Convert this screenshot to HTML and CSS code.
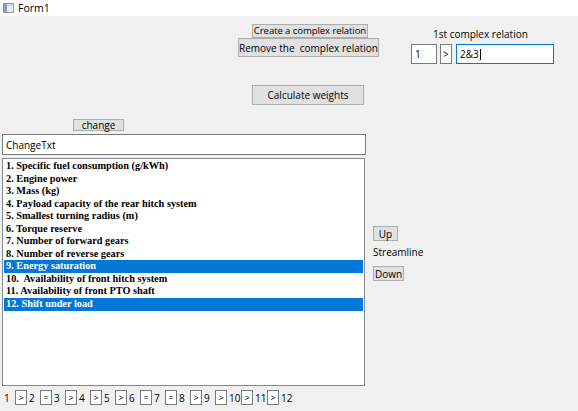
FILE: index.html
```html
<!DOCTYPE html>
<html>
<head>
<meta charset="utf-8">
<link rel="stylesheet" href="styles.css">
</head>
<body>
<div class="window">
  <div class="titlebar">
    <svg class="appicon" width="11" height="10" viewBox="0 0 11 10">
      <rect x="0.5" y="0.5" width="10" height="9" fill="#e8eef0" stroke="#8a9aa0"/>
      <rect x="1" y="1" width="3" height="8" fill="#7fa6b0"/>
      <rect x="4" y="1" width="6" height="2" fill="#c9d6da"/>
    </svg>
    <span class="title">Form1</span>
  </div>
  <div class="form">
    <div class="row-top">
      <div class="relbtns">
        <button class="btn btn-create">Create a complex relation</button>
        <button class="btn btn-remove">Remove the&nbsp; complex relation</button>
      </div>
      <div class="complex">
        <div class="complex-label">1st complex relation</div>
        <div class="complex-inputs">
          <div class="tb tb-num">1</div>
          <div class="tb tb-op">&gt;</div>
          <div class="tb tb-rel">2&amp;3<span class="caret"></span></div>
        </div>
      </div>
    </div>
    <div class="row-calc">
      <button class="btn btn-calc">Calculate weights</button>
    </div>
    <div class="row-change">
      <button class="btn btn-change">change</button>
    </div>
    <div class="tb tb-change">ChangeTxt</div>
    <div class="row-list">
      <ul class="list">
        <li>1. Specific fuel consumption (g/kWh)</li>
        <li>2. Engine power</li>
        <li>3. Mass (kg)</li>
        <li>4. Payload capacity of the rear hitch system</li>
        <li>5. Smallest turning radius (m)</li>
        <li>6. Torque reserve</li>
        <li>7. Number of forward gears</li>
        <li>8. Number of reverse gears</li>
        <li class="sel">9. Energy saturation</li>
        <li>10.&nbsp; Availability of front hitch system</li>
        <li>11. Availability of front PTO shaft</li>
        <li class="sel">12. Shift under load</li>
      </ul>
      <div class="side">
        <button class="btn btn-up">Up</button>
        <div class="streamline">Streamline</div>
        <button class="btn btn-down">Down</button>
      </div>
    </div>
    <div class="row-rel">
      <span class="n">1</span><span class="op">&gt;</span>
      <span class="n">2</span><span class="op">=</span>
      <span class="n">3</span><span class="op">&gt;</span>
      <span class="n">4</span><span class="op">&gt;</span>
      <span class="n">5</span><span class="op">&gt;</span>
      <span class="n">6</span><span class="op">=</span>
      <span class="n">7</span><span class="op">=</span>
      <span class="n">8</span><span class="op">&gt;</span>
      <span class="n">9</span><span class="op">&gt;</span>
      <span class="n n2">10</span><span class="op">&gt;</span>
      <span class="n n2">11</span><span class="op">&gt;</span>
      <span class="n">12</span>
    </div>
  </div>
</div>
</body>
</html>
```
FILE: styles.css
```css
* { box-sizing: border-box; }
html, body { margin: 0; padding: 0; }
body {
  width: 578px;
  height: 411px;
  overflow: hidden;
  background: #f0f0f0;
  font-family: "Open Sans", "Noto Sans", sans-serif;
  font-size: 10px;
  color: #000;
}
.window { width: 578px; height: 411px; display: flex; flex-direction: column; }
.titlebar {
  height: 16px;
  background: #ffffff;
  display: flex;
  align-items: center;
  padding-left: 3px;
  flex: none;
}
.appicon { margin-right: 4px; }
.title { font-size: 10.5px; color: #000; }
.form {
  flex: 1;
  background: #f0f0f0;
  display: flex;
  flex-direction: column;
}
.btn {
  font-family: inherit;
  font-size: 10px;
  background: #e1e1e1;
  border: 1px solid #adadad;
  padding: 0;
  margin: 0;
  color: #000;
  display: flex;
  align-items: center;
  justify-content: center;
  line-height: 1;
  white-space: nowrap;
}
.row-top {
  display: flex;
  align-items: flex-start;
  height: 48px;
  margin-top: 8px;
}
.relbtns {
  margin-left: 238px;
  width: 141px;
  display: flex;
  flex-direction: column;
  align-items: flex-start;
}
.btn-create { width: 116px; height: 14px; margin-left: 14px; font-size: 9.6px; letter-spacing: -0.1px; }
.btn-remove { width: 141px; height: 19px; }
.complex { margin-left: 32px; margin-top: 4px; }
.complex-label { padding-left: 22px; height: 13px; line-height: 13px; }
.complex-inputs { display: flex; align-items: flex-start; margin-top: 3px; }
.tb {
  background: #fff;
  border: 1px solid #7a7a7a;
  display: flex;
  align-items: center;
  padding-left: 3px;
}
.tb-num { width: 26px; height: 20px; }
.tb-op { width: 12px; height: 20px; margin-left: 3px; padding-left: 2px; }
.tb-rel { width: 98px; height: 20px; margin-left: 4px; border-color: #0078d7; }
.caret { display: inline-block; width: 1px; height: 11px; background: #000; margin-left: 1px; }
.row-calc { height: 20px; margin-top: 13px; padding-left: 252px; display: flex; }
.btn-calc { width: 112px; height: 20px; }
.row-change { margin-top: 14px; padding-left: 73px; display: flex; }
.btn-change { width: 51px; height: 12px; }
.tb-change { width: 364px; height: 21px; margin-left: 2px; margin-top: 3px; padding-left: 3px; }
.row-list { display: flex; margin-top: 3px; }
.list {
  list-style: none;
  margin: 0 0 0 2px;
  padding: 1px 1px 0 1px;
  width: 363px;
  height: 228px;
  background: #fff;
  border: 1px solid #828790;
  font-family: "Liberation Serif", serif;
  font-weight: bold;
  font-size: 10.3px;
}
.list li { height: 12.55px; line-height: 12.55px; padding-left: 2px; white-space: nowrap; }
.list li.sel { background: #0078d7; color: #fff; }
.side { margin-left: 8px; display: flex; flex-direction: column; align-items: flex-start; padding-top: 68px; }
.btn-up { width: 25px; height: 15px; }
.streamline { margin-top: 5px; height: 13px; line-height: 13px; }
.btn-down { width: 31px; height: 15px; margin-top: 7px; }
.row-rel { display: flex; align-items: center; margin-top: 4px; padding-left: 4px; height: 15px; }
.row-rel .n { width: 11px; font-size: 10px; }
.row-rel .n2 { width: 12px; }
.row-rel .op {
  width: 12px; height: 15px; background: #fff; border: 1px solid #7a7a7a;
  font-size: 9px; display: flex; align-items: center; justify-content: center;
  margin-right: 2px;
}
```
